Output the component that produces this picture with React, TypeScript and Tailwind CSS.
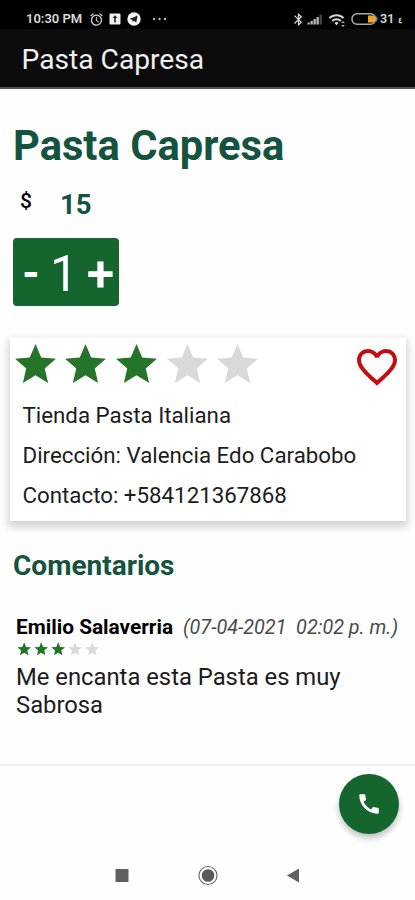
import {
  MdAlarm,
  MdBluetooth,
  MdCall,
  MdFavoriteBorder,
  MdStar,
  MdWifi,
} from "react-icons/md";

function StatusBar() {
  return (
    <div className="flex h-[29px] items-center bg-black pt-[9px] pl-[26px] text-[13px] font-semibold text-[#d8d8d8]">
      <span className="w-[63px] whitespace-nowrap">10:30 PM</span>
      <MdAlarm className="size-[15px] shrink-0" />
      {/* Notification box */}
      <svg viewBox="0 0 12 12" className="ml-[5px] size-[12px] shrink-0">
        <rect x="0.5" y="0.5" width="11" height="11" rx="1" fill="#f0f0f0" />
        <path d="M6 2.3L8.4 5H6.8v4.5H5.2V5H3.6z" fill="#222" />
      </svg>
      {/* Telegram */}
      <svg viewBox="0 0 14 14" className="ml-[6px] size-[14px] shrink-0">
        <circle cx="7" cy="7" r="6.7" fill="#f5f5f5" />
        <path d="M2.6 6.9l8-3.3-1.3 7-2.4-1.8-1.2 1.2-.3-2z" fill="#222" />
      </svg>
      <svg viewBox="0 0 16 4" className="ml-[11px] h-[4px] w-[16px] shrink-0">
        <circle cx="2" cy="2" r="1.2" fill="#bbb" />
        <circle cx="7.5" cy="2" r="1.2" fill="#bbb" />
        <circle cx="13" cy="2" r="1.2" fill="#bbb" />
      </svg>
      <MdBluetooth className="ml-[123px] size-[15px] shrink-0" />
      <svg viewBox="0 0 16 12" className="ml-[1px] h-[12px] w-[16px] shrink-0">
        <path d="M0.5 9.5h2.3v2H0.5zM3.5 8h2.3v3.5H3.5zM6.5 6h2.3v5.5H6.5zM9.5 4h2.3v7.5H9.5z" fill="#bbb" />
        <path d="M12.5 1.5h2.3v10h-2.3z" fill="#484848" />
      </svg>
      <MdWifi className="ml-[5px] size-[17px] shrink-0" />
      <svg viewBox="0 0 4 6" className="mt-[9px] -ml-[4px] h-[6px] w-[4px] shrink-0">
        <path d="M0 2L2 0L4 2zM0 4L2 6L4 4z" fill="#aaa" />
      </svg>
      <svg viewBox="0 0 28 12" className="ml-[6px] h-[12px] w-[28px] shrink-0">
        <rect x="1" y="0.8" width="23.5" height="10.4" rx="5" fill="none" stroke="#aaa" strokeWidth="1.5" />
        <path d="M25.3 3q2.4 3 0 6z" fill="#aaa" />
        <path d="M17 2.5h4a3.5 3.5 0 0 1 0 7h-4z" fill="#eda324" />
      </svg>
      <span className="ml-[1px] text-[12.5px]">31</span>
      <span className="ml-[4px] pt-[3px] text-[8px]">٤</span>
    </div>
  );
}

function Rating({ value, small }: { value: number; small?: boolean }) {
  return (
    <div className={small ? "flex gap-[0.5px]" : "flex gap-[1.7px]"}>
      {[1, 2, 3, 4, 5].map((n) => (
        <MdStar
          key={n}
          className={
            (small ? "size-[16.4px] " : "size-[49px] ") +
            (n <= value ? "text-[#26732a]" : "text-[#d9d9d9]")
          }
        />
      ))}
    </div>
  );
}

export default function App() {
  return (
    <div className="flex h-[900px] w-[415px] flex-col overflow-hidden bg-[#fefefe] font-['Roboto',sans-serif] text-[#1c1c1c]">
      <StatusBar />
      <header className="flex h-[60px] items-center border-b-2 border-[#555] bg-[#0c0c0c] pt-[4px] pl-[21.5px]">
        <h1 className="text-[28.2px] text-[#f0f0f0]">Pasta Capresa</h1>
      </header>

      <main className="flex h-[675px] flex-col">
        <h2 className="mt-[32px] pl-[13px] text-[41.7px] leading-[50px] font-bold text-[#14543f]">
          Pasta Capresa
        </h2>
        <div className="mt-[13px] flex h-[40px] pl-[20px]">
          <span className="w-[40px] text-[21px] leading-[34px] font-medium text-black">$</span>
          <span className="text-[27.5px] leading-[42px] font-bold text-[#14543f]">15</span>
        </div>

        {/* Quantity */}
        <div className="mt-[14px] ml-[13px] flex h-[68px] w-[106px] items-center rounded-[4px] bg-[#15652e] text-white">
          <button className="w-[36px] pt-[2px] text-center text-[44px] leading-[60px] font-bold">-</button>
          <span className="w-[30px] pt-[3px] text-center text-[50px] leading-[60px]">1</span>
          <button className="w-[40px] pt-[4px] pl-[3px] text-center text-[50px] leading-[60px] font-semibold">+</button>
        </div>

        {/* Store card */}
        <section className="mt-[32px] ml-[10px] h-[183px] w-[396px] bg-white shadow-[0_4px_8px_2px_rgba(0,0,0,0.18)]">
          <div className="flex h-[57px] items-start justify-between pt-[2px] pr-[5px] pl-[0.5px]">
            <Rating value={3} />
            <MdFavoriteBorder className="mt-[3px] size-[48px] text-[#c40d12]" />
          </div>
          <div className="pl-[12.5px] text-[22.3px] leading-[40px] whitespace-nowrap">
            <p>Tienda Pasta Italiana</p>
            <p>Dirección: Valencia Edo Carabobo</p>
            <p>Contacto: +584121367868</p>
          </div>
        </section>

        <h3 className="mt-[25px] pl-[13px] text-[28px] leading-[40px] font-bold text-[#14543f]">
          Comentarios
        </h3>

        {/* Comment */}
        <article className="mt-[27px] pl-[16px]">
          <div className="flex h-[28px] items-center pt-px whitespace-nowrap">
            <span className="w-[167px] text-[20.8px] font-bold text-black">Emilio Salaverria</span>
            <span className="text-[19.8px] whitespace-pre text-[#4a4a4a] italic">
              (07-04-2021  02:02 p. m.)
            </span>
          </div>
          <Rating value={3} small />
          <p className="mt-[6px] w-[370px] text-[23.8px] leading-[28px]">
            Me encanta esta Pasta es muy Sabrosa
          </p>
        </article>
      </main>

      <footer className="flex h-[86px] shrink-0 justify-end border-t-2 border-[#eee] pt-[8px] pr-[16px]">
        <button className="flex size-[60px] items-center justify-center rounded-full bg-[#15652e] text-white shadow-[0_4px_6px_rgba(0,0,0,0.25)]">
          <MdCall className="size-[26px]" />
        </button>
      </footer>

      {/* Android navigation */}
      <nav className="flex h-[50px] items-center">
        <svg viewBox="0 0 415 50" className="h-[50px] w-[415px]">
          <rect x="115.5" y="19" width="13" height="13" fill="#606060" />
          <circle cx="208" cy="25.5" r="9" fill="none" stroke="#707070" strokeWidth="1.2" />
          <circle cx="208" cy="25.5" r="6.3" fill="#5a5a5a" />
          <path d="M287 25.5L299 18.5V32.5Z" fill="#606060" />
        </svg>
      </nav>
    </div>
  );
}
